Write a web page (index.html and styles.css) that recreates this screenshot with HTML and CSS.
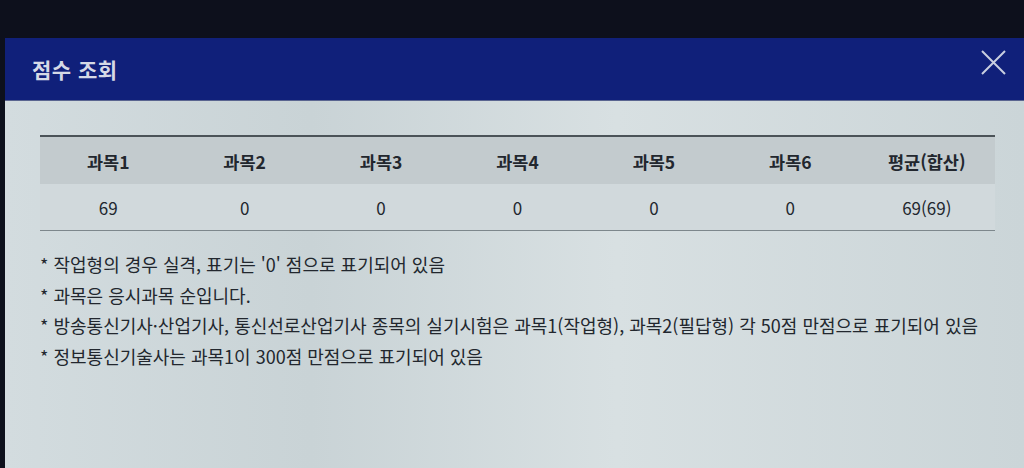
FILE: index.html
```html
<!DOCTYPE html>
<html lang="ko">
<head>
<meta charset="utf-8">
<link rel="stylesheet" href="styles.css">
</head>
<body>
<div class="modal">
  <div class="modal-head">
    <h1 class="title">점수 조회</h1>
    <svg class="close" width="25" height="25" viewBox="0 0 25 25"><path d="M1 1L24 24M24 1L1 24" stroke="#c9cfe0" stroke-width="2" fill="none"/></svg>
  </div>
  <div class="modal-body">
    <table class="scores">
      <thead>
        <tr><th>과목1</th><th>과목2</th><th>과목3</th><th>과목4</th><th>과목5</th><th>과목6</th><th>평균(합산)</th></tr>
      </thead>
      <tbody>
        <tr><td>69</td><td>0</td><td>0</td><td>0</td><td>0</td><td>0</td><td>69(69)</td></tr>
      </tbody>
    </table>
    <ul class="notes">
      <li>* 작업형의 경우 실격, 표기는 '0' 점으로 표기되어 있음</li>
      <li>* 과목은 응시과목 순입니다.</li>
      <li>* 방송통신기사·산업기사, 통신선로산업기사 종목의 실기시험은 과목1(작업형), 과목2(필답형) 각 50점 만점으로 표기되어 있음</li>
      <li>* 정보통신기술사는 과목1이 300점 만점으로 표기되어 있음</li>
    </ul>
  </div>
</div>
</body>
</html>
```
FILE: styles.css
```css
html, body {
  margin: 0;
  padding: 0;
  background: #0d101c;
  height: 100%;
  overflow: hidden;
  font-family: "Noto Sans CJK KR", "Noto Sans", sans-serif;
}
.modal {
  margin: 38px 0 0 5px;
  height: 430px;
  background: linear-gradient(90deg, #d3dcdf 0%, #c9d3d6 30%, #d8e0e2 60%, #cbd5d8 100%);
}
.modal-head {
  height: 62px;
  background: #10207a;
  display: flex;
  align-items: center;
  justify-content: space-between;
  padding: 0 18px 0 27px;
  border-bottom: 1px solid #5a6590;
}
.title {
  margin: 0;
  font-size: 21px;
  font-weight: 700;
  color: #d5d9e6;
  letter-spacing: 0.5px;
}
.close {
  margin-top: -14px;
}
.modal-body {
  padding: 34px 29px 0 35px;
}
.scores {
  width: 100%;
  table-layout: fixed;
  border-collapse: collapse;
  border-top: 2px solid #4b5358;
  border-bottom: 1px solid #7d878c;
  color: #22272e;
}
.scores th {
  height: 44px;
  background: #c3cbce;
  font-size: 17.5px;
  font-weight: 700;
  padding-top: 2px;
}
.scores td {
  height: 44px;
  text-align: center;
  background: #d1d9dc;
  font-size: 17px;
}
.notes {
  list-style: none;
  margin: 18px 0 0 0;
  padding: 0;
  color: #22272e;
  font-size: 18px;
}
.notes li {
  line-height: 30.5px;
}
```
